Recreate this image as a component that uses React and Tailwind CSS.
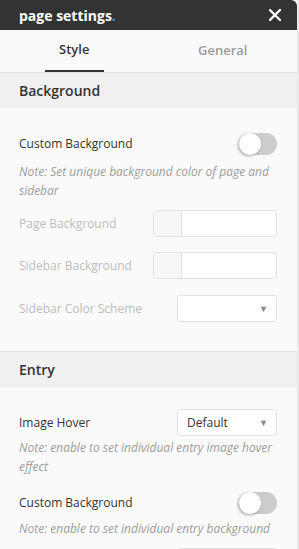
import React from "react";

function Toggle() {
  return (
    <div className="relative w-[38px] h-[22px] rounded-full bg-[#cccccc] shrink-0">
      <div className="absolute left-0 top-0 w-[22px] h-[22px] rounded-full bg-white shadow-[-1px_1px_3px_rgba(0,0,0,0.35)]" />
    </div>
  );
}

function Select({ value, arrow = true }) {
  return (
    <div className="w-[100px] h-[27px] rounded-[3px] border border-[#e3e3e3] bg-white flex items-center justify-between pl-[9px] pr-[8px] shrink-0">
      <span className="text-[12px] text-[#333]">{value}</span>
      {arrow && <span className="text-[9px] text-[#888]">▼</span>}
    </div>
  );
}

function ColorBox() {
  return (
    <div className="w-[124px] h-[27px] rounded-[3px] border border-[#e3e3e3] bg-white flex overflow-hidden shrink-0">
      <div className="w-[28px] h-full bg-[#f7f7f7] border-r border-[#e3e3e3]" />
    </div>
  );
}

function Note({ children, className = "" }) {
  return (
    <p className={"text-[12px] italic leading-[19px] text-[#9d9d9d] " + className}>{children}</p>
  );
}

export default function App() {
  return (
    <div className="w-[299px] h-[549px] bg-[#e9e9e9] overflow-hidden" style={{ fontFamily: '"Open Sans", sans-serif' }}>
      <div className="w-[297px] h-[549px] bg-[#fafafa] overflow-hidden">
        <div className="h-[30px] bg-[#333333] rounded-tr-[6px] flex items-center justify-between pl-[19px] pr-[16px]">
          <span className="text-[14px] font-bold text-white">
            page settings<span className="text-[#1fa3dc]">.</span>
          </span>
          <svg width="12" height="12" viewBox="0 0 12 12">
            <path d="M1 1L11 11M11 1L1 11" stroke="white" strokeWidth="2.3" strokeLinecap="square" />
          </svg>
        </div>
        <div className="h-[43px] bg-[#fafafa] border-b border-[#e2e2e2] flex">
          <div className="flex-1 flex justify-center">
            <div className="w-[59px] h-[42px] flex items-center justify-center border-b-2 border-[#333] text-[13px] font-semibold text-[#333]">
              Style
            </div>
          </div>
          <div className="flex-1 flex items-center justify-center text-[13px] font-semibold text-[#9a9a9a] pb-[1px]">
            General
          </div>
        </div>

        <div className="h-[35px] bg-[#f0f0f0] flex items-center pl-[19px] text-[14px] font-semibold text-[#333]">
          Background
        </div>
        <div className="px-[19px] pt-[25px] pb-[29px] border-b border-[#e2e2e2]">
          <div className="flex items-center justify-between h-[22px] pr-[1px]">
            <span className="text-[12px] text-[#333]">Custom Background</span>
            <Toggle />
          </div>
          <Note className="mt-[7px]">Note: Set unique background color of page and sidebar</Note>
          <div className="mt-[10px] flex flex-col gap-[15px] pr-[1px]">
            <div className="flex items-center justify-between">
              <span className="text-[12px] text-[#bdbdbd]">Page Background</span>
              <ColorBox />
            </div>
            <div className="flex items-center justify-between">
              <span className="text-[12px] text-[#bdbdbd]">Sidebar Background</span>
              <ColorBox />
            </div>
            <div className="flex items-center justify-between mt-[1px]">
              <span className="text-[12px] text-[#bdbdbd]">Sidebar Color Scheme</span>
              <Select value="" />
            </div>
          </div>
        </div>

        <div className="h-[35px] bg-[#f0f0f0] flex items-center pl-[19px] text-[14px] font-semibold text-[#333]">
          Entry
        </div>
        <div className="pl-[19px] pt-[22px] pr-[20px]">
          <div className="flex items-center justify-between">
            <span className="text-[12px] text-[#333]">Image Hover</span>
            <Select value="Default" />
          </div>
          <Note className="mt-[2px]">Note: enable to set individual entry image hover effect</Note>
          <div className="mt-[16px] flex items-center justify-between h-[22px]">
            <span className="text-[12px] text-[#333]">Custom Background</span>
            <Toggle />
          </div>
          <Note className="mt-[5px]">Note: enable to set individual entry background</Note>
          <div className="mt-[10px] flex justify-end">
            <Select value="" arrow={false} />
          </div>
        </div>
      </div>
    </div>
  );
}
